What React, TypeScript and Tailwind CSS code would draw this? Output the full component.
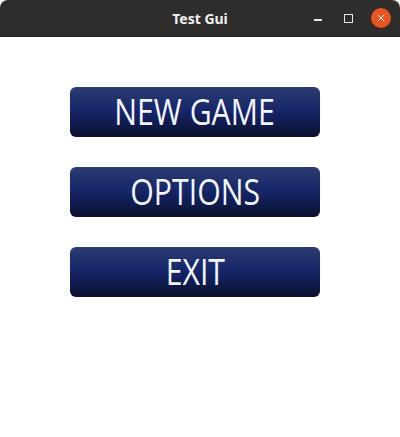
import { X } from 'lucide-react';

const BUTTONS = ['NEW GAME', 'OPTIONS', 'EXIT'];

function MenuButton({ label }: { label: string }) {
  return (
    <button className="flex h-[50px] w-[250px] items-center justify-center rounded-[6px] bg-gradient-to-b from-[#2c3c72] via-[#142468] to-[#0b1130]">
      <span
        className="inline-block origin-center scale-x-[0.84] text-[36px] leading-none text-[#f2f4f8]"
        style={{ fontFamily: '"Open Sans", "Noto Sans", sans-serif' }}
      >
        {label}
      </span>
    </button>
  );
}

export default function App() {
  return (
    <div className="flex h-[437px] w-[400px] flex-col bg-white">
      {/* Title bar */}
      <div className="relative flex h-[37px] shrink-0 items-center justify-center rounded-t-[8px] border-b border-[#1e1e1e] bg-[#2e2d2c]">
        <span
          className="text-[14px] font-bold text-[#f0f0f0]"
          style={{ fontFamily: '"Noto Sans", "DejaVu Sans", sans-serif' }}
        >
          Test Gui
        </span>
        <div className="absolute right-[9px] top-0 flex h-full items-center">
          <div className="flex h-[20px] w-[30px] items-center justify-center">
            <div className="mt-[4px] h-[1.5px] w-[8px] bg-[#e8e8e8]" />
          </div>
          <div className="flex h-[20px] w-[30px] items-center justify-center">
            <div className="h-[9px] w-[9px] border border-[#e8e8e8]" />
          </div>
          <div className="ml-[8px] flex h-[20px] w-[20px] items-center justify-center rounded-full bg-[#e95420]">
            <X size={12} strokeWidth={2} className="text-white" />
          </div>
        </div>
      </div>

      {/* Menu */}
      <div className="flex flex-col gap-[30px] pl-[70px] pt-[50px]">
        {BUTTONS.map((b) => (
          <MenuButton key={b} label={b} />
        ))}
      </div>
    </div>
  );
}
